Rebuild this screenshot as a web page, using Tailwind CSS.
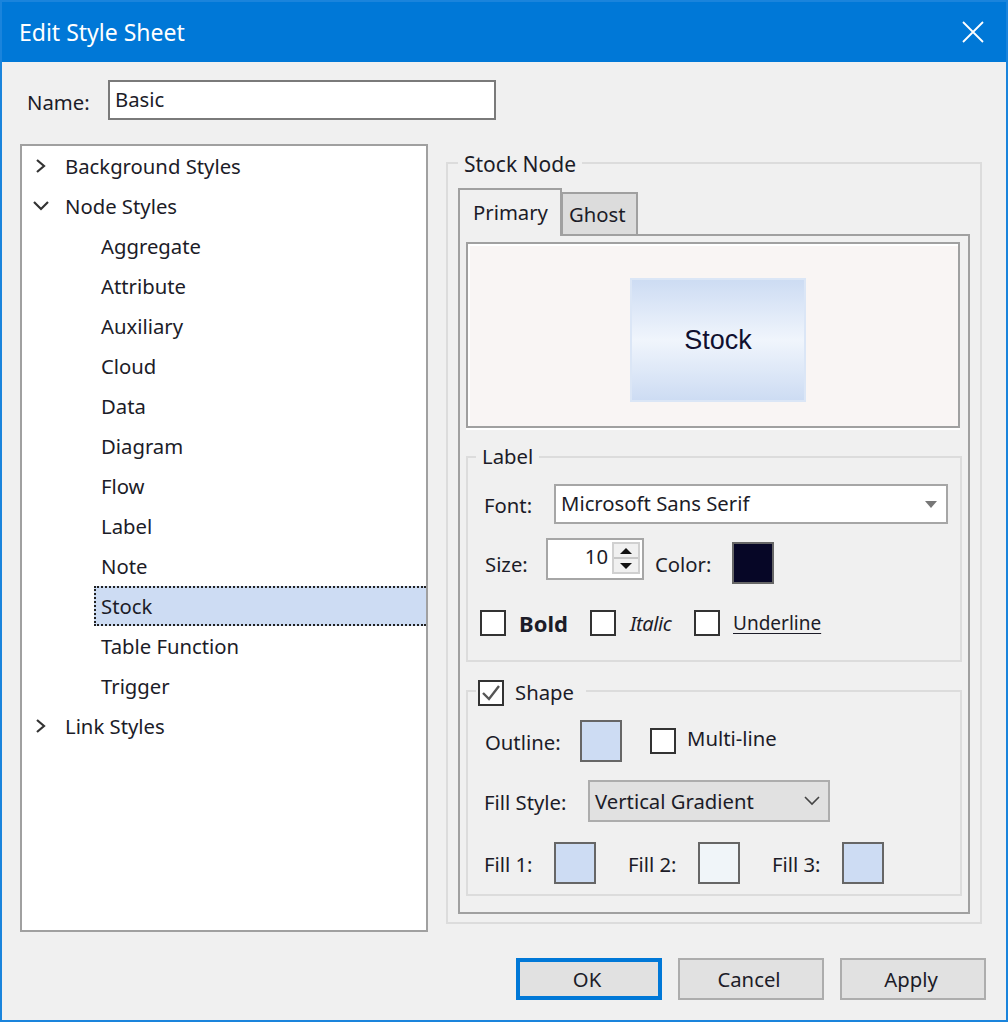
<!DOCTYPE html>
<html lang="en">
<head>
  <meta charset="UTF-8" />
  <title>Edit Style Sheet</title>
  <script src="https://cdn.jsdelivr.net/npm/@tailwindcss/browser@4"></script>
</head>
<body class="bg-[#f0f0f0] font-['Noto_Sans',sans-serif] text-[20.3px] leading-[19px] text-[#1c1c28]">
  <div class="w-[1008px] h-[1022px] border-2 border-[#1a84dc] flex flex-col">

    <!-- title bar -->
    <div class="h-[60px] bg-[#0078d7] flex items-center justify-between pl-[17px] pr-[22px] text-white text-[23px] shrink-0">
      <span>Edit Style Sheet</span>
      <svg width="22" height="22" viewBox="0 0 22 22" fill="none" stroke="white" stroke-width="1.8"><path d="M1 1 L21 21 M21 1 L1 21"/></svg>
    </div>

    <!-- name -->
    <div class="flex items-center h-10 mt-[18px] ml-[25px]">
      <span class="w-[81px] pt-[4px]">Name:</span>
      <div class="w-[388px] h-10 bg-white border-2 border-[#7a7a7a] flex items-center pl-[5px] pb-px">Basic</div>
    </div>

    <div class="flex mt-[24px] ml-[18px]">
      <!-- tree -->
      <div class="w-[408px] h-[788px] bg-white border-2 border-[#a0a0a0] shrink-0">
        <div class="h-10 flex items-center pl-[13px]">
          <svg class="w-[12px] h-[16px] mr-[18px]" viewBox="0 0 12 16" fill="none" stroke="#333" stroke-width="2.2"><path d="M2 2 L9 8 L2 14"/></svg>
          <span>Background Styles</span>
        </div>
        <div class="h-10 flex items-center pl-[11px]">
          <svg class="w-[16px] h-[12px] mr-[16px]" viewBox="0 0 16 12" fill="none" stroke="#333" stroke-width="2.2"><path d="M1 2 L8 9 L15 2"/></svg>
          <span>Node Styles</span>
        </div>
        <div class="h-10 flex items-center pl-[79px]">Aggregate</div>
        <div class="h-10 flex items-center pl-[79px]">Attribute</div>
        <div class="h-10 flex items-center pl-[79px]">Auxiliary</div>
        <div class="h-10 flex items-center pl-[79px]">Cloud</div>
        <div class="h-10 flex items-center pl-[79px]">Data</div>
        <div class="h-10 flex items-center pl-[79px]">Diagram</div>
        <div class="h-10 flex items-center pl-[79px]">Flow</div>
        <div class="h-10 flex items-center pl-[79px]">Label</div>
        <div class="h-10 flex items-center pl-[79px]">Note</div>
        <div class="h-10 flex items-center ml-[72px] pl-[5px] bg-[#cddcf3] border-2 border-r-0 border-dotted border-[#222]">Stock</div>
        <div class="h-10 flex items-center pl-[79px]">Table Function</div>
        <div class="h-10 flex items-center pl-[79px]">Trigger</div>
        <div class="h-10 flex items-center pl-[13px]">
          <svg class="w-[12px] h-[16px] mr-[18px]" viewBox="0 0 12 16" fill="none" stroke="#333" stroke-width="2.2"><path d="M2 2 L9 8 L2 14"/></svg>
          <span>Link Styles</span>
        </div>
      </div>

      <!-- stock node group -->
      <div class="relative w-[536px] h-[762px] mt-[18px] ml-[18px] border-2 border-[#dcdcdc] pt-[24px] pl-[10px]">
        <span class="absolute left-[10px] -top-[12px] bg-[#f0f0f0] px-[6px] h-6 flex items-center text-[21px]">Stock Node</span>

        <div class="flex items-start h-[46px]">
          <div class="relative z-10 w-[104px] h-12 bg-[#f0f0f0] border-2 border-b-0 border-[#a0a0a0] flex items-center pl-[13px] pb-px">Primary</div>
          <div class="w-[77px] h-[42px] mt-1 -ml-px bg-[#dcdcdc] border-2 border-b-0 border-[#a0a0a0] flex items-center pl-[6px] pt-px">Ghost</div>
        </div>

        <div class="w-[512px] h-[680px] border-2 border-[#a0a0a0] pt-[6px] pl-[6px]">
          <!-- preview -->
          <div class="w-[494px] h-[186px] bg-[#f9f5f4] border-2 border-[#a0a0a0] shadow-[inset_2px_2px_0_#fff,0_2px_0_#fff] flex items-center justify-center pl-[10px] pt-[10px]">
            <div class="w-[176px] h-[124px] border-2 border-[#dbe6f6] bg-gradient-to-b from-[#cddcf3] via-[#f0f5fc] to-[#cddcf3] flex items-center justify-center text-[27px] text-[#101030] font-['Liberation_Sans',sans-serif]">Stock</div>
          </div>

          <!-- label group -->
          <div class="relative w-[496px] h-[206px] mt-[28px] border-2 border-[#dcdcdc] pt-[26px] pl-[16px]">
            <span class="absolute left-[8px] -top-[14px] bg-[#f0f0f0] px-[6px] h-6 flex items-center">Label</span>
            <div class="flex items-center h-10">
              <span class="w-[70px] pt-[3px]">Font:</span>
              <div class="w-[394px] h-10 bg-white border-2 border-[#a6a6a6] flex items-center justify-between pl-[5px] pr-[9px] pb-px">
                <span>Microsoft Sans Serif</span>
                <svg class="mt-[2px]" width="12" height="7" viewBox="0 0 12 7" fill="#777"><path d="M0 0 H12 L6 7 Z"/></svg>
              </div>
            </div>
            <div class="flex items-start mt-[14px] h-[46px]">
              <span class="w-[62px] h-[42px] flex items-center pl-px pt-[10px]">Size:</span>
              <div class="w-[98px] h-[42px] bg-white border-2 border-[#a6a6a6] flex justify-end pt-[2px] pr-[2px]">
                <span class="mr-[4px] mt-[5px]">10</span>
                <div class="w-[28px] h-[32px] border-2 border-[#d0d0d0] flex flex-col bg-[#f0f0f0]">
                  <div class="h-[13px] flex items-center justify-center"><svg width="12" height="6" viewBox="0 0 12 6" fill="#111"><path d="M6 0 L12 6 H0 Z"/></svg></div>
                  <div class="h-[2px] bg-[#c8c8c8]"></div>
                  <div class="h-[13px] flex items-center justify-center"><svg width="12" height="6" viewBox="0 0 12 6" fill="#111"><path d="M0 0 H12 L6 6 Z"/></svg></div>
                </div>
              </div>
              <span class="w-[77px] ml-[11px] h-[42px] flex items-center pt-[10px]">Color:</span>
              <div class="w-[42px] h-[42px] mt-1 bg-[#060626] border-2 border-[#666]"></div>
            </div>
            <div class="flex items-center mt-[26px] -ml-1 h-[26px]">
              <div class="w-[26px] h-[26px] bg-white border-2 border-[#333]"></div>
              <span class="ml-[13px] w-[71px] font-bold text-[22px]">Bold</span>
              <div class="w-[26px] h-[26px] bg-white border-2 border-[#333]"></div>
              <span class="ml-[14px] w-[64px] italic text-[20px] tracking-[-0.4px]">Italic</span>
              <div class="w-[26px] h-[26px] bg-white border-2 border-[#333]"></div>
              <span class="ml-[13px] underline underline-offset-[3px] text-[19px]">Underline</span>
            </div>
          </div>

          <!-- shape group -->
          <div class="relative w-[496px] h-[206px] mt-[28px] border-2 border-[#dcdcdc] pt-[28px] pl-[17px]">
            <div class="absolute left-[8px] -top-[12px] bg-[#f0f0f0] pr-[12px] pl-[2px] flex items-center">
              <div class="w-[26px] h-[26px] bg-white border-2 border-[#333] flex items-center justify-center">
                <svg width="20" height="18" viewBox="0 0 20 18" fill="none" stroke="#555" stroke-width="2.4"><path d="M2 9 L8 15 L18 2"/></svg>
              </div>
              <span class="ml-[11px] -mt-px">Shape</span>
            </div>
            <div class="flex items-center h-[42px]">
              <span class="w-[95px] pt-[2px]">Outline:</span>
              <div class="w-[42px] h-[42px] bg-[#cddcf3] border-2 border-[#666]"></div>
              <div class="w-[26px] h-[26px] ml-[28px] bg-white border-2 border-[#333]"></div>
              <span class="ml-[11px] -mt-[6px]">Multi-line</span>
            </div>
            <div class="flex items-center mt-[18px] h-[42px] -ml-px">
              <span class="w-[104px] pt-[2px]">Fill Style:</span>
              <div class="w-[242px] h-[42px] bg-[#e1e1e1] border-2 border-[#adadad] flex items-center justify-between pl-[5px] pr-[8px]">
                <span>Vertical Gradient</span>
                <svg width="16" height="10" viewBox="0 0 16 10" fill="none" stroke="#444" stroke-width="1.6"><path d="M1 1 L8 8 L15 1"/></svg>
              </div>
            </div>
            <div class="flex items-center mt-[20px] h-[42px] -ml-px">
              <span class="w-[70px] pt-[2px]">Fill 1:</span>
              <div class="w-[42px] h-[42px] bg-[#cddcf3] border-2 border-[#666]"></div>
              <span class="w-[70px] ml-[32px] pt-[2px]">Fill 2:</span>
              <div class="w-[42px] h-[42px] bg-[#f0f5f9] border-2 border-[#666]"></div>
              <span class="w-[70px] ml-[32px] pt-[2px]">Fill 3:</span>
              <div class="w-[42px] h-[42px] bg-[#cddcf3] border-2 border-[#666]"></div>
            </div>
          </div>
        </div>
      </div>
    </div>

    <!-- buttons -->
    <div class="flex justify-end gap-4 mt-[26px] pr-5">
      <div class="w-[146px] h-[42px] bg-[#e1e1e1] border-[4px] border-[#0078d7] flex items-center justify-center pr-[4px]">OK</div>
      <div class="w-[146px] h-[42px] bg-[#e1e1e1] border-2 border-[#adadad] flex items-center justify-center pr-[4px]">Cancel</div>
      <div class="w-[146px] h-[42px] bg-[#e1e1e1] border-2 border-[#adadad] flex items-center justify-center pr-[4px]">Apply</div>
    </div>
  </div>
</body>
</html>
